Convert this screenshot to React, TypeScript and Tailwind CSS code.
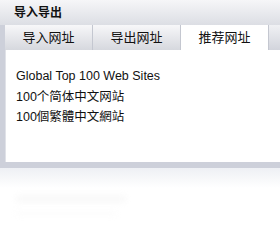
import React from 'react';

const tabs = ['导入网址', '导出网址', '推荐网址'];
const sites = ['Global Top 100 Web Sites', '100个简体中文网站', '100個繁體中文網站'];

export default function App() {
  const active = 2;
  return (
    <div
      className="w-[280px] h-[248px] overflow-hidden bg-white text-[#111]"
      style={{ fontFamily: '"Liberation Sans", Arial, "Noto Sans CJK SC", sans-serif' }}
    >
      <div className="bg-[#cdd0da] pl-[5px] pb-[6px]">
        {/* Title */}
        <div className="h-[25px] -ml-[5px] pl-[14px] pt-[1px] flex items-center bg-gradient-to-b from-[#f6f6f8] to-[#dcdee4] text-[12px] font-bold">
          导入导出
        </div>
        {/* Tabs */}
        <div className="flex h-[25px] bg-gradient-to-b from-[#f0f1f4] to-[#d2d4dc]">
          {tabs.map((t, i) => (
            <div
              key={t}
              className={`w-[88px] flex items-center justify-center text-[13px] border-r border-[#c4c7d0] ${
                i === active ? 'bg-white' : 'bg-gradient-to-b from-[#f7f7f9] to-[#d6d8de]'
              }`}
            >
              {t}
            </div>
          ))}
        </div>
        {/* Content */}
        <div className="bg-white h-[112px] pl-[10px] pt-[16px] border-l border-[#e0e2e8] flex flex-col text-[12.5px] leading-[20.5px]">
          {sites.map(s => (
            <div key={s}>{s}</div>
          ))}
        </div>
      </div>
      <div className="h-[20px] bg-gradient-to-b from-[#eef0f4] to-white" />
      <div className="pl-[16px] pt-[8px] flex flex-col gap-[10px] opacity-30 blur-[3px]">
        <div className="w-[110px] h-[6px] bg-[#e6e6e6]" />
        <div className="w-[100px] h-[3px] bg-[#f0f0f0]" />
      </div>
    </div>
  );
}
